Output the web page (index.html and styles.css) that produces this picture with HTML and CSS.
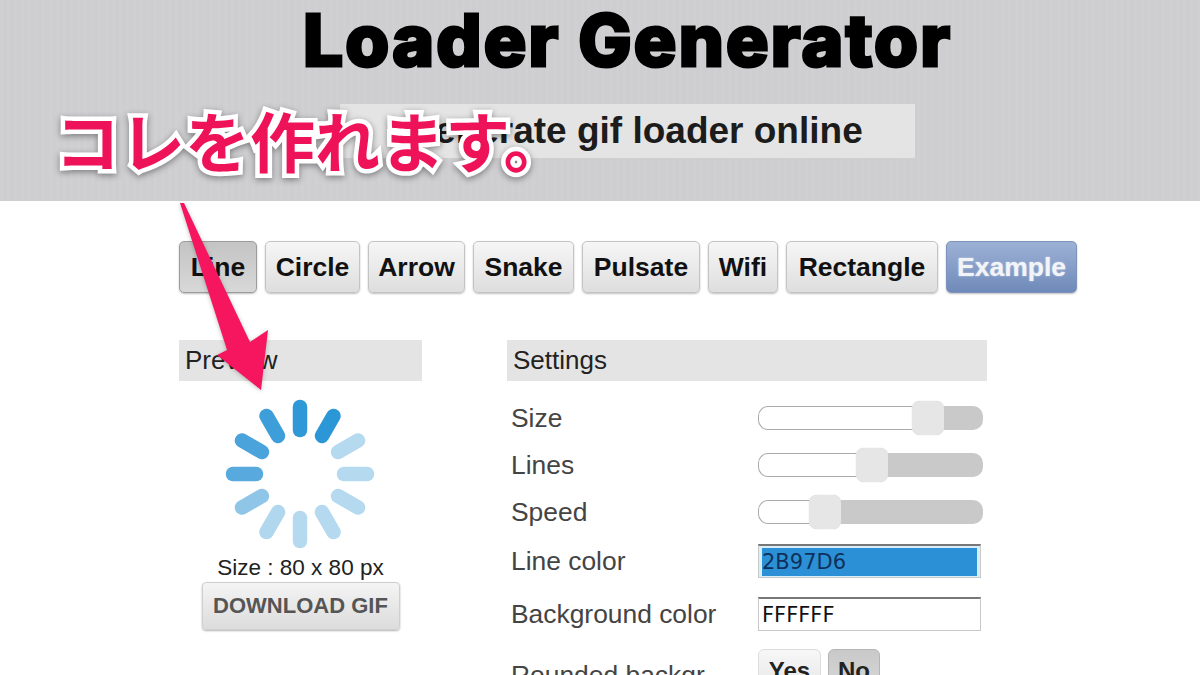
FILE: index.html
```html
<!DOCTYPE html>
<html lang="en">
<head>
<meta charset="utf-8">
<title>Loader Generator</title>
<link rel="stylesheet" href="styles.css">
</head>
<body>
<header class="hero">
  <h1 class="title">Loader Generator</h1>
  <h2 class="subtitle">Generate gif loader online</h2>
</header>
<main class="content">
  <nav class="tabs">
    <button class="tab tab-active w-line">Line</button>
    <button class="tab w-circle">Circle</button>
    <button class="tab w-arrow">Arrow</button>
    <button class="tab w-snake">Snake</button>
    <button class="tab w-pulsate">Pulsate</button>
    <button class="tab w-wifi">Wifi</button>
    <button class="tab w-rectangle">Rectangle</button>
    <button class="tab tab-example w-example">Example</button>
  </nav>
  <div class="columns">
    <section class="preview">
      <h3 class="panel-title">Preview</h3>
      <svg class="spinner" width="150" height="150" viewBox="-75 -75 150 150" aria-hidden="true">
        <g stroke-width="14.5" stroke-linecap="round" fill="none">
          <line x1="0" y1="-67" x2="0" y2="-44" stroke="#2f99d7"/>
          <line x1="0" y1="-67" x2="0" y2="-44" stroke="#2b97d6" transform="rotate(30)"/>
          <line x1="0" y1="-67" x2="0" y2="-44" stroke="#b5d9ef" transform="rotate(60)"/>
          <line x1="0" y1="-67" x2="0" y2="-44" stroke="#b5d9ef" transform="rotate(90)"/>
          <line x1="0" y1="-67" x2="0" y2="-44" stroke="#b5d9ef" transform="rotate(120)"/>
          <line x1="0" y1="-67" x2="0" y2="-44" stroke="#b5d9ef" transform="rotate(150)"/>
          <line x1="0" y1="-67" x2="0" y2="-44" stroke="#b5d9ef" transform="rotate(180)"/>
          <line x1="0" y1="-67" x2="0" y2="-44" stroke="#b0d7ee" transform="rotate(210)"/>
          <line x1="0" y1="-67" x2="0" y2="-44" stroke="#8fc6e8" transform="rotate(240)"/>
          <line x1="0" y1="-67" x2="0" y2="-44" stroke="#58a9dd" transform="rotate(270)"/>
          <line x1="0" y1="-67" x2="0" y2="-44" stroke="#4aa3db" transform="rotate(300)"/>
          <line x1="0" y1="-67" x2="0" y2="-44" stroke="#3d9ed9" transform="rotate(330)"/>
        </g>
      </svg>
      <p class="size-note">Size : 80 x 80 px</p>
      <button class="download">DOWNLOAD GIF</button>
    </section>
    <section class="settings">
      <h3 class="panel-title">Settings</h3>
      <div class="form">
        <div class="row row-slider">
          <span class="label">Size</span>
          <div class="slider"><span class="fill" style="width:154px"></span><span class="handle"></span><span class="rest"></span></div>
        </div>
        <div class="row row-slider">
          <span class="label">Lines</span>
          <div class="slider"><span class="fill" style="width:98px"></span><span class="handle"></span><span class="rest"></span></div>
        </div>
        <div class="row row-slider">
          <span class="label">Speed</span>
          <div class="slider"><span class="fill" style="width:51px"></span><span class="handle"></span><span class="rest"></span></div>
        </div>
        <div class="row row-line">
          <span class="label">Line color</span>
          <div class="field field-selected"><span class="selected-text">2B97D6</span></div>
        </div>
        <div class="row row-bg">
          <span class="label">Background color</span>
          <div class="field"><span>FFFFFF</span></div>
        </div>
        <div class="row row-rounded">
          <span class="label">Rounded backgr</span>
          <div class="toggle">
            <button class="toggle-btn">Yes</button>
            <button class="toggle-btn toggle-on">No</button>
          </div>
        </div>
      </div>
    </section>
  </div>
</main>
<div class="callout" lang="ja">コレを作れます。</div>
<svg class="arrow" width="120" height="210" viewBox="170 195 120 210" aria-hidden="true">
  <polygon points="180,203 184,203 250,342 268,330 261,390 217,355 227,350" fill="#f5165f"/>
</svg>
</body>
</html>
```

FILE: styles.css
```css
html, body {
  margin: 0;
  padding: 0;
  height: 675px;
  overflow: hidden;
  background: #fff;
  font-family: "Liberation Sans", Arial, sans-serif;
  color: #222;
}

h1, h2, h3, p { margin: 0; }
button { font-family: inherit; margin: 0; padding: 0; }

.hero {
  height: 201px;
  box-sizing: border-box;
  background-color: #cfcfd2;
  background-image:
    repeating-linear-gradient(90deg, rgba(255,255,255,.018) 0 3px, rgba(0,0,0,.004) 3px 7px);
  display: flex;
  flex-direction: column;
}

.title {
  align-self: flex-start;
  margin-left: 303px;
  width: 680px;
  height: 83px;
  font-family: Inter, sans-serif;
  font-weight: 800;
  font-size: 71px;
  line-height: 80px;
  letter-spacing: 2.2px;
  white-space: nowrap;
  color: #000;
  -webkit-text-stroke: 3px #000;
  stroke-linejoin: round;
  text-shadow: 0 0 3px rgba(255,255,255,.75);
}

.subtitle {
  margin: 21px 0 0 340px;
  width: 575px;
  height: 54px;
  box-sizing: border-box;
  padding-left: 14px;
  background: #e4e4e4;
  text-align: center;
  font-size: 37px;
  line-height: 54px;
  font-weight: 700;
  color: #1c1c1c;
}

.content {
  padding: 40px 0 0 179px;
}

.tabs {
  display: flex;
  gap: 8px;
  height: 52px;
}

.tab {
  height: 52px;
  box-sizing: border-box;
  border: 1px solid #c4c4c4;
  border-radius: 5px;
  background: linear-gradient(#f6f6f6, #dedede);
  box-shadow: 0 1px 2px rgba(0,0,0,.25);
  font-size: 26.5px;
  font-weight: 700;
  color: #111;
}

.w-line { width: 78px; }
.w-circle { width: 95px; }
.w-arrow { width: 97px; }
.w-snake { width: 101px; }
.w-pulsate { width: 118px; }
.w-wifi { width: 70px; }
.w-rectangle { width: 152px; }
.w-example { width: 131px; }

.tab-active {
  background: linear-gradient(#c4c4c4, #d8d8d8);
  border-color: #9c9c9c;
}

.tab-example {
  background: linear-gradient(#9db1d6, #6f8ab9);
  border-color: #7d93bd;
  color: #f2f4f8;
  text-shadow: 0 0 2px rgba(255,255,255,.6);
}

.columns {
  display: flex;
  gap: 85px;
  margin-top: 47px;
}

.panel-title {
  height: 41px;
  box-sizing: border-box;
  padding-left: 6px;
  background: #e4e4e4;
  font-size: 26px;
  line-height: 41px;
  font-weight: 400;
  color: #222;
}

.preview {
  width: 243px;
  display: flex;
  flex-direction: column;
  align-items: center;
}

.preview .panel-title { align-self: stretch; }

.spinner {
  display: block;
  margin: 18px 1px 0 0;
}

.size-note {
  margin-top: 4px;
  font-size: 22.5px;
  line-height: 30px;
  color: #222;
  white-space: nowrap;
}

.download {
  width: 198px;
  height: 48px;
  margin-top: -1px;
  box-sizing: border-box;
  border: 1px solid #cfcfcf;
  border-radius: 4px;
  background: linear-gradient(#f4f4f4, #dcdcdc);
  box-shadow: 0 1px 2px rgba(0,0,0,.3);
  font-size: 22px;
  font-weight: 700;
  color: #555;
  white-space: nowrap;
}

.settings { width: 480px; }

.form {
  padding-left: 4px;
  margin-top: 13px;
  display: flex;
  flex-direction: column;
}

.row {
  display: grid;
  grid-template-columns: 247px 225px;
  align-items: center;
}

.row-slider { height: 47px; }
.row-line { height: 34px; margin-top: 9px; }
.row-bg { height: 34px; margin-top: 19px; }
.row-rounded { height: 44px; margin-top: 18px; align-items: start; }

.row-rounded .label { margin-top: 11px; }

.label {
  font-size: 26.4px;
  line-height: 30px;
  color: #444;
  white-space: nowrap;
}

.slider {
  display: flex;
  align-items: center;
  height: 34px;
}

.fill {
  height: 24px;
  box-sizing: border-box;
  border: 1.5px solid #aaa;
  border-right: 0;
  border-radius: 10px 0 0 10px;
  background: #fff;
}

.rest {
  flex: 1;
  height: 24px;
  background: #c9c9c9;
  border-radius: 0 10px 10px 0;
}

.handle {
  width: 32px;
  height: 34px;
  flex: none;
  border-radius: 8px;
  background: #e6e6e6;
  box-shadow: 0 0 1px rgba(0,0,0,.25);
}

.field {
  width: 223px;
  height: 34px;
  box-sizing: border-box;
  padding: 2px 3px;
  border: 1px solid #c8c8c8;
  border-top: 2px solid #777;
  background: #fff;
  font-family: "DejaVu Sans", sans-serif;
  font-size: 21px;
  line-height: 28px;
  color: #111;
}

.field span {
  display: block;
  height: 28px;
}

.field-selected { background: #d8eef8; }
.selected-text { background: #2b90d6; color: #10315c; }

.toggle {
  display: flex;
  gap: 7px;
}

.toggle-btn {
  height: 44px;
  box-sizing: border-box;
  border: 1px solid #ddd;
  border-radius: 6px;
  background: linear-gradient(#f7f7f7, #e6e6e6);
  font-size: 24px;
  font-weight: 700;
  color: #222;
  width: 63px;
}

.toggle-on {
  width: 52px;
  background: linear-gradient(#c9c9c9, #d8d8d8);
  border-color: #b5b5b5;
}

.callout {
  position: absolute;
  left: 55px;
  top: 97px;
  font-family: "Noto Sans CJK JP", sans-serif;
  font-weight: 700;
  font-size: 65px;
  line-height: 84px;
  white-space: nowrap;
  color: #ee1259;
  -webkit-text-stroke: 9px #fff;
  paint-order: stroke fill;
  filter: drop-shadow(0 2px 3px rgba(0,0,0,.4));
}

.arrow {
  position: absolute;
  left: 170px;
  top: 195px;
  filter: drop-shadow(0 1px 2px rgba(0,0,0,.25));
}
```
